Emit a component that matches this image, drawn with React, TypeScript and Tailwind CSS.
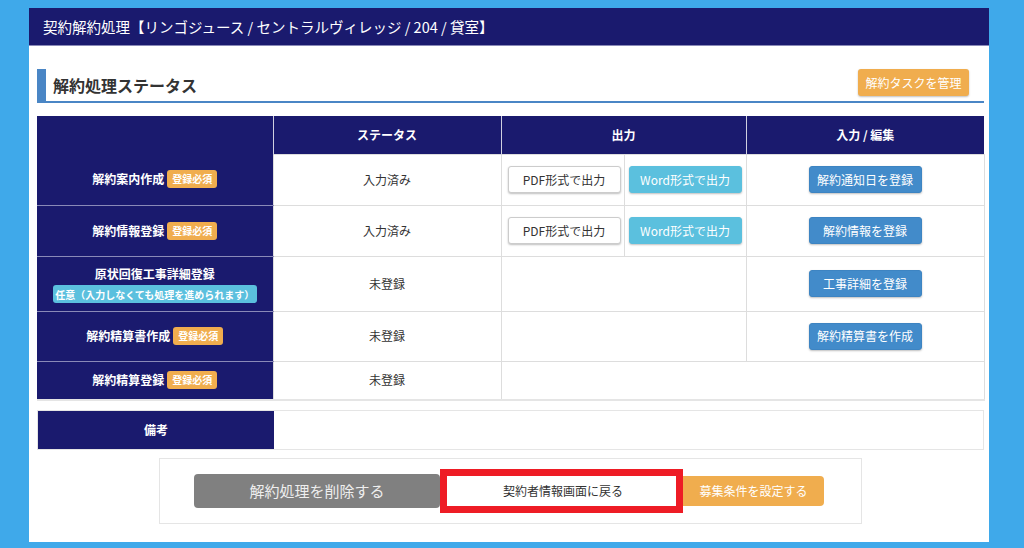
import React from "react";

const font = { fontFamily: '"Noto Sans CJK JP", "Noto Sans", sans-serif' };

function Badge() {
  return (
    <span className="ml-[3px] inline-flex h-[18px] items-center rounded-[3px] bg-[#f0ad4e] px-[5px] text-[10px] font-bold leading-none text-white">
      登録必須
    </span>
  );
}

function Btn({ children, kind }: { children: React.ReactNode; kind: "white" | "info" | "primary" }) {
  const cls =
    kind === "white"
      ? "bg-white border border-[#cccccc] text-[#333333]"
      : kind === "info"
      ? "bg-[#5bc0de] border border-[#5bc0de] text-white"
      : "bg-[#428bca] border border-[#3d84c2] text-white";
  return (
    <span
      className={`inline-flex h-[27px] w-[113px] items-center justify-center rounded-[3px] text-[12px] shadow-[0_1px_2px_rgba(0,0,0,0.25)] ${cls}`}
    >
      {children}
    </span>
  );
}

function LabelCell({ children, h }: { children: React.ReactNode; h: string }) {
  return (
    <td className={`${h} w-[236px] border-b border-[#8a8ab8] bg-[#1a1a6e] p-0 text-center text-[12px] font-bold text-white`}>
      {children}
    </td>
  );
}

export default function App() {
  return (
    <div style={font} className="h-[548px] w-[1024px] overflow-hidden bg-[#3fa9ea] pl-[29px] pt-[8px]">
      <div className="flex h-[534px] w-[960px] flex-col bg-white">
        <div className="flex h-[38px] items-center border-b border-[#8a8ab8] bg-[#1a1a6e] pl-[14px] text-[14.5px] text-white">
          契約解約処理【リンゴジュース / セントラルヴィレッジ / 204 / 貸室】
        </div>
        <div className="flex flex-col pl-[8px] pr-[5px]">
          <div className="mt-[23px] flex h-[34px] items-start justify-between border-b-2 border-[#4a86c5]">
            <div className="flex h-[32px] items-center border-l-[9px] border-[#4a86c5] pl-[7px] text-[16px] font-bold text-[#333333]">
              解約処理ステータス
            </div>
            <span className="mr-[15px] inline-flex h-[27px] w-[111px] items-center justify-center rounded-[3px] bg-[#f0ad4e] text-[12px] text-white shadow-[0_1px_2px_rgba(0,0,0,0.25)]">
              解約タスクを管理
            </span>
          </div>

          <table className="mt-[13px] w-[947px] table-fixed border-collapse text-[12px] text-[#333333]">
            <colgroup>
              <col className="w-[236px]" />
              <col className="w-[228px]" />
              <col className="w-[245px]" />
              <col className="w-[238px]" />
            </colgroup>
            <tbody>
              <tr className="h-[38px] bg-[#1a1a6e] text-white">
                <th className="border-r border-[#d0d0e0] p-0"></th>
                <th className="border-r border-[#d0d0e0] p-0 text-[12px] font-bold">ステータス</th>
                <th className="border-r border-[#d0d0e0] p-0 text-[12px] font-bold">出力</th>
                <th className="p-0 text-[12px] font-bold">入力 / 編集</th>
              </tr>
              {[
                { label: "解約案内作成", btn: "解約通知日を登録" },
                { label: "解約情報登録", btn: "解約情報を登録" },
              ].map((r) => (
                <tr key={r.label} className="h-[51px]">
                  <LabelCell h="h-[51px]">
                    <span className="inline-flex items-center">
                      {r.label}
                      <Badge />
                    </span>
                  </LabelCell>
                  <td className="border border-[#dddddd] p-0 text-center">入力済み</td>
                  <td className="border border-[#dddddd] p-0">
                    <div className="flex h-[50px]">
                      <div className="flex w-[123px] items-center justify-start border-r border-[#dddddd] pl-[6px]">
                        <Btn kind="white">PDF形式で出力</Btn>
                      </div>
                      <div className="flex flex-1 items-center pl-[4px]">
                        <Btn kind="info">Word形式で出力</Btn>
                      </div>
                    </div>
                  </td>
                  <td className="border border-[#dddddd] p-0 text-center">
                    <Btn kind="primary">{r.btn}</Btn>
                  </td>
                </tr>
              ))}
              <tr className="h-[55px]">
                <LabelCell h="h-[55px]">
                  <div className="flex flex-col items-center gap-[2px] pt-[1px]">
                    <span>原状回復工事詳細登録</span>
                    <span className="inline-flex h-[18px] w-[204px] items-center justify-center whitespace-nowrap rounded-[3px] bg-[#5bc0de] text-[10px] font-bold text-white">
                      任意（入力しなくても処理を進められます）
                    </span>
                  </div>
                </LabelCell>
                <td className="border border-[#dddddd] p-0 text-center">未登録</td>
                <td className="border border-[#dddddd] p-0"></td>
                <td className="border border-[#dddddd] p-0 text-center">
                  <Btn kind="primary">工事詳細を登録</Btn>
                </td>
              </tr>
              <tr className="h-[50px]">
                <LabelCell h="h-[50px]">
                  <span className="inline-flex items-center">
                    解約精算書作成
                    <Badge />
                  </span>
                </LabelCell>
                <td className="border border-[#dddddd] p-0 text-center">未登録</td>
                <td className="border border-[#dddddd] p-0"></td>
                <td className="border border-[#dddddd] p-0 text-center">
                  <Btn kind="primary">解約精算書を作成</Btn>
                </td>
              </tr>
              <tr className="h-[39px]">
                <td className="h-[39px] border-b-2 border-[#e5e5e5] bg-[#1a1a6e] p-0 text-center text-[12px] font-bold text-white">
                  <span className="inline-flex items-center">
                    解約精算登録
                    <Badge />
                  </span>
                </td>
                <td className="border border-b-2 border-[#dddddd] border-b-[#e5e5e5] p-0 text-center">未登録</td>
                <td colSpan={2} className="border border-b-2 border-[#dddddd] border-b-[#e5e5e5] p-0"></td>
              </tr>
            </tbody>
          </table>

          <div className="mt-[9px] flex h-[40px] w-[947px] border border-[#e5e5e5]">
            <div className="flex w-[236px] items-center justify-center bg-[#1a1a6e] text-[12px] font-bold text-white">
              備考
            </div>
            <div className="flex-1 bg-white"></div>
          </div>

          <div className="mx-auto mt-[8px] flex h-[66px] w-[703px] items-center border border-[#e5e5e5] pl-[34px]">
            <span className="inline-flex h-[34px] w-[246px] items-center justify-center rounded-[4px] bg-[#808080] text-[15px] text-[#eeeeee]">
              解約処理を削除する
            </span>
            <div className="flex h-[44px] w-[243px] items-center border-[7px] border-[#ee1c25] bg-white">
              <span className="pl-[56px] text-[12px] text-[#333333]">契約者情報画面に戻る</span>
            </div>
            <span className="inline-flex h-[30px] w-[141px] items-center justify-center rounded-r-[4px] bg-[#f0ad4e] text-[12px] text-white">
              募集条件を設定する
            </span>
          </div>
        </div>
      </div>
    </div>
  );
}
